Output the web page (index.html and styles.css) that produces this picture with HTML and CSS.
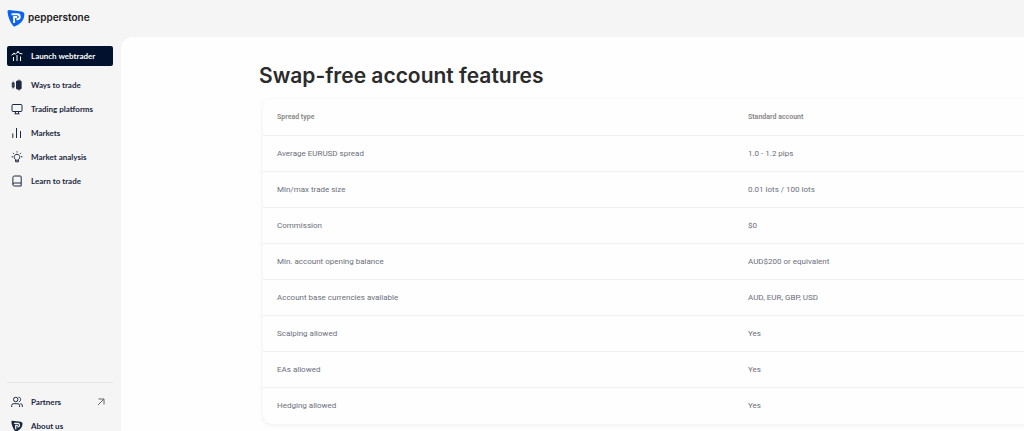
FILE: index.html
```html
<!DOCTYPE html>
<html lang="en">
<head>
    <meta charset="UTF-8">
    <meta name="viewport" content="width=device-width, initial-scale=1.0">
    <title>Swap-free account features | Pepperstone</title>
    <link rel="stylesheet" href="styles.css">
</head>
<body>
    <div class="sidebar">
        <a class="logo" href="#">
            <svg class="logo-mark" viewBox="0 0 18 18">
                <path d="M2.3 1 L14.6 2.5 Q17.6 3 17.3 6 C17 12 12.5 15.5 7.8 17.4 Q6.6 17.8 5.9 16.6 C2.8 12.5 1 8 .5 2.8 Q.4 .8 2.3 1Z" fill="#0a62f5"/>
                <path d="M4.6 5.2H10.2C13.6 5.2 13.6 10.2 10.2 10.2H9.4M7.1 14V8H10.2" fill="none" stroke="#fff" stroke-width="1.9"/>
            </svg>
            <span>pepperstone</span>
        </a>
        <button class="launch-btn" type="button">
            <svg class="icon" viewBox="0 0 12 12">
                <path d="M2.5 11V7M6 11V5M9.5 11V6.5M.6 5.2L3 3.4L4.6 4L7 1.8L9 3.6L11.4 3.8"/>
                <circle cx="3" cy="3.6" r=".5"/>
                <circle cx="7" cy="2" r=".5"/>
            </svg>
            Launch webtrader
        </button>
        <nav class="menu">
            <a href="#">
                <svg class="icon" viewBox="0 0 12 12">
                    <path d="M2.2 2.5V9.5M8 .5V11.5"/>
                    <rect x="1.3" y="4.2" width="1.8" height="3.6"/>
                    <rect class="solid" x="5.5" y="2" width="4.6" height="8" rx=".5"/>
                </svg>
                Ways to trade
            </a>
            <a href="#">
                <svg class="icon" viewBox="0 0 12 12">
                    <rect x="1" y="1.5" width="10" height="7" rx="1"/>
                    <path d="M4.5 8.5V10.8M7.5 8.5V10.8M3.5 10.8H8.5"/>
                </svg>
                Trading platforms
            </a>
            <a href="#">
                <svg class="icon" viewBox="0 0 12 12">
                    <path d="M1.8 11V6.5M5.5 11V1M9.5 11V4"/>
                </svg>
                Markets
            </a>
            <a href="#">
                <svg class="icon" viewBox="0 0 12 12">
                    <path d="M4.6 8.6C2.2 7 3 3.3 6 3.3S9.8 7 7.4 8.6V10.8H4.6ZM4.6 9.2H7.4M6 .3V1.5M.6 5.8H2M10 5.8H11.4M2 1.9L3 2.9M10 1.9L9 2.9"/>
                </svg>
                Market analysis
            </a>
            <a href="#">
                <svg class="icon" viewBox="0 0 12 12">
                    <path d="M10.2 8H3.4Q1.9 8 1.9 9.5V2.5Q1.9 1 3.4 1H9.2Q10.2 1 10.2 2V11H3.4Q1.9 11 1.9 9.5"/>
                </svg>
                Learn to trade
            </a>
        </nav>
        <nav class="menu menu-bottom">
            <a href="#">
                <svg class="icon" viewBox="0 0 12 12">
                    <circle cx="4.7" cy="3.5" r="2.2"/>
                    <path d="M.7 11V9.5Q.7 7.7 2.5 7.7H6.8Q8.6 7.7 8.6 9.5V11M7.5 1.2C10.3 1 10.3 5.6 7.8 5.7M9.3 7.7Q11.3 7.7 11.3 9.5V11"/>
                </svg>
                Partners
                <svg class="arrow" viewBox="0 0 8 8">
                    <path d="M1 7L7 1M1.5 1H7V6.5"/>
                </svg>
            </a>
            <a href="#">
                <svg class="icon" viewBox="0 0 18 18">
                    <path class="badge" d="M2.3 1 L14.6 2.5 Q17.6 3 17.3 6 C17 12 12.5 15.5 7.8 17.4 Q6.6 17.8 5.9 16.6 C2.8 12.5 1 8 .5 2.8 Q.4 .8 2.3 1Z"/>
                    <path class="badge-letter" d="M4.6 5.2H10.2C13.6 5.2 13.6 10.2 10.2 10.2H9.4M7.1 14V8H10.2"/>
                </svg>
                About us
            </a>
        </nav>
    </div>
    <main class="main-content">
        <h1>Swap-free account features</h1>
        <div class="table-card">
            <table>
                <thead>
                    <tr><th>Spread type</th><th>Standard account</th></tr>
                </thead>
                <tbody>
                    <tr><td>Average EURUSD spread</td><td>1.0 - 1.2 pips</td></tr>
                    <tr><td>Min/max trade size</td><td>0.01 lots / 100 lots</td></tr>
                    <tr><td>Commission</td><td>$0</td></tr>
                    <tr><td>Min. account opening balance</td><td>AUD$200 or equivalent</td></tr>
                    <tr><td>Account base currencies available</td><td>AUD, EUR, GBP, USD</td></tr>
                    <tr><td>Scalping allowed</td><td>Yes</td></tr>
                    <tr><td>EAs allowed</td><td>Yes</td></tr>
                    <tr><td>Hedging allowed</td><td>Yes</td></tr>
                </tbody>
            </table>
        </div>
    </main>
</body>
</html>
```
FILE: styles.css
```css
* {
    box-sizing: border-box;
}
body {
    margin: 0;
    height: 100vh;
    overflow: hidden;
    display: flex;
    background-color: #f5f5f5;
    color: #1c2840;
    font-family: Inter, 'Open Sans', sans-serif;
}
.sidebar {
    width: 121px;
    flex-shrink: 0;
    padding: 9px 8px 0 7px;
    display: flex;
    flex-direction: column;
    font-family: Lato, sans-serif;
}
.logo {
    display: flex;
    align-items: center;
    gap: 3px;
    height: 18px;
    color: #1c1c1c;
    font-family: Inter, sans-serif;
    font-size: 10px;
    font-weight: 600;
    line-height: 16px;
    text-decoration: none;
}
.logo span {
    padding-bottom: 2px;
}
.logo-mark {
    width: 18px;
    height: 18px;
}
.launch-btn {
    display: flex;
    align-items: center;
    gap: 8px;
    height: 20px;
    margin-top: 19px;
    padding: 0 4px;
    background-color: #00122e;
    color: white;
    border: none;
    border-radius: 2px;
    font-family: inherit;
    font-size: 8px;
    font-weight: 700;
    white-space: nowrap;
    cursor: pointer;
}
.menu {
    display: flex;
    flex-direction: column;
    gap: 8px;
    margin-top: 11px;
}
.menu a {
    display: flex;
    align-items: center;
    gap: 8px;
    height: 16px;
    padding: 0 4px;
    color: inherit;
    font-size: 8px;
    font-weight: 700;
    text-decoration: none;
    white-space: nowrap;
}
.menu-bottom {
    margin-top: auto;
    padding-top: 11px;
    border-top: 1px solid #e6e6e6;
    /* last link sits slightly below the fold */
    margin-bottom: -3px;
}
.icon {
    width: 12px;
    height: 12px;
    flex-shrink: 0;
    fill: none;
    stroke: currentColor;
    stroke-width: 1;
}
.icon .solid {
    fill: currentColor;
}
.icon .badge {
    fill: currentColor;
    stroke: none;
}
.icon .badge-letter {
    stroke: #f5f5f5;
    stroke-width: 1.9;
}
.arrow {
    width: 8px;
    height: 8px;
    margin-left: auto;
    margin-right: 4px;
    fill: none;
    stroke: #666;
}
.main-content {
    flex: 1;
    min-width: 0;
    margin-top: 37px;
    padding: 25px 0 0 138px;
    background-color: #fefefe;
    border-top-left-radius: 12px;
    overflow: hidden;
}
h1 {
    margin: 0;
    color: #2b2b2b;
    font-size: 21px;
    font-weight: 600;
    line-height: 28px;
}
.table-card {
    /* the card runs off the right edge of the page */
    margin: 9px -16px 0 4px;
    background-color: #fefefe;
    border-radius: 9px;
    box-shadow: 0 1px 4px 1px rgba(0, 0, 0, 0.05);
}
table {
    width: 100%;
    table-layout: fixed;
    border-collapse: separate;
    border-spacing: 0;
    font-family: Roboto, sans-serif;
    font-size: 8px;
    line-height: 12px;
}
th, td {
    height: 36px;
    padding: 0 14px;
    border-bottom: 1px solid #f0f0f1;
    text-align: left;
}
th {
    height: 37px;
    width: 471px;
    color: #858585;
    font-size: 7px;
    font-weight: 600;
}
th:last-child {
    width: auto;
}
td {
    color: #6b6f7b;
    font-weight: 400;
}
tbody tr:last-child td {
    border-bottom: none;
}
```
